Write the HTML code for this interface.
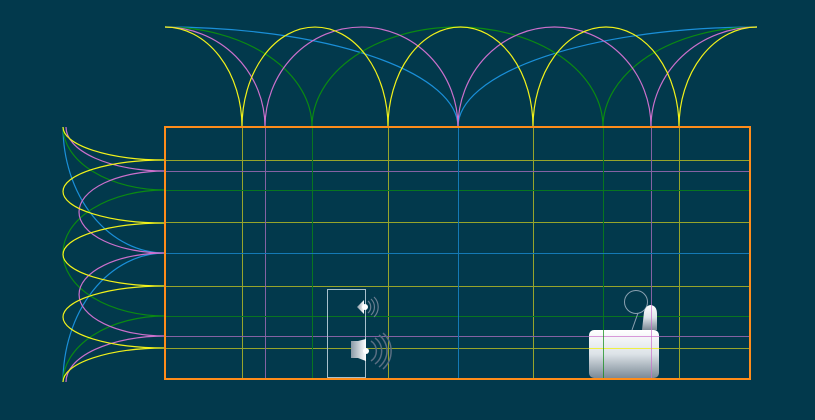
<!DOCTYPE html>
<html><head><meta charset="utf-8"><style>
html,body{margin:0;padding:0;background:#02394c;width:815px;height:420px;overflow:hidden}
</style></head><body>
<svg width="815" height="420" viewBox="0 0 815 420" xmlns="http://www.w3.org/2000/svg">
<defs>
<linearGradient id="g1" x1="0" y1="0" x2="0" y2="1"><stop offset="0" stop-color="#ffffff"/><stop offset="0.5" stop-color="#dde3e8"/><stop offset="1" stop-color="#7c8a96"/></linearGradient>
<linearGradient id="g2" x1="0" y1="0" x2="1" y2="0"><stop offset="0" stop-color="#8a9aa6"/><stop offset="1" stop-color="#ffffff"/></linearGradient>
</defs>
<g fill="none" stroke-width="1.2">
<path d="M165,27 A293,100 0 0 1 458,127 A299,100 0 0 1 757,27" stroke="#1a8fd8"/>
<path d="M165,27 A147,100 0 0 1 312,127 A145.5,100 0 0 1 603,127 A154,100 0 0 1 757,27" stroke="#0b8a12"/>
<path d="M165,27 A100,100 0 0 1 265,127 A96.5,100 0 0 1 458,127 A96.5,100 0 0 1 651,127 A106,100 0 0 1 757,27" stroke="#cc70cc"/>
<path d="M165,27 A77,100 0 0 1 242,127 A73,100 0 0 1 388,127 A72.5,100 0 0 1 533,127 A73,100 0 0 1 679,127 A78,100 0 0 1 757,27" stroke="#f2f21a"/>
<path d="M63,127 A102,126 0 0 0 165,253 A102,129 0 0 0 63,382" stroke="#1a8fd8"/>
<path d="M63,127 A102,63 0 0 0 165,190 A102,63 0 0 0 165,316 A102,66 0 0 0 63,382" stroke="#0b8a12"/>
<path d="M66,127 A99,44 0 0 0 165,171 A86,41 0 0 0 165,253 A86,41.5 0 0 0 165,336 A99,46 0 0 0 66,382" stroke="#cc70cc"/>
<path d="M63,127 A102,33 0 0 0 165,160 A102,31.5 0 0 0 165,223 A102,31.5 0 0 0 165,286 A102,31 0 0 0 165,348 A102,34 0 0 0 63,382" stroke="#f2f21a"/>
</g>
<g stroke-width="1" opacity="0.75">
<g stroke="#c8c820"><line x1="165" y1="160.5" x2="750" y2="160.5"/><line x1="165" y1="222.5" x2="750" y2="222.5"/><line x1="165" y1="286.5" x2="750" y2="286.5"/><line x1="165" y1="348.5" x2="750" y2="348.5"/>
<line x1="242.5" y1="127" x2="242.5" y2="379"/><line x1="388.5" y1="127" x2="388.5" y2="379"/><line x1="533.5" y1="127" x2="533.5" y2="379"/><line x1="679.5" y1="127" x2="679.5" y2="379"/></g>
<g stroke="#b070c0"><line x1="165" y1="171.5" x2="750" y2="171.5"/><line x1="165" y1="336.5" x2="750" y2="336.5"/><line x1="265.5" y1="127" x2="265.5" y2="379"/><line x1="651.5" y1="127" x2="651.5" y2="379"/></g>
<g stroke="#0b8a12"><line x1="165" y1="190.5" x2="750" y2="190.5"/><line x1="165" y1="316.5" x2="750" y2="316.5"/><line x1="312.5" y1="127" x2="312.5" y2="379"/><line x1="603.5" y1="127" x2="603.5" y2="379"/></g>
<g stroke="#1a8fd8"><line x1="165" y1="253.5" x2="750" y2="253.5"/><line x1="458.5" y1="127" x2="458.5" y2="379"/></g>
</g>
<rect x="165" y="127" width="585" height="252" fill="none" stroke="#ff8c1a" stroke-width="2"/>
<rect x="327.5" y="289.5" width="38" height="88" fill="none" stroke="#a8c0cc" stroke-width="1"/>
<polygon points="357,307 364,300 364,314" fill="url(#g2)"/>
<circle cx="365" cy="307" r="3" fill="#fff"/>
<g fill="none" stroke="#6a7e90" stroke-width="1.2"><path d="M368,301 A8,8 0 0 1 368,313"/><path d="M371,299 A11,11 0 0 1 371,315"/><path d="M374,297 A14,14 0 0 1 374,317"/></g>
<polygon points="351,341 358,341 366,339 366,361 358,358 351,358" fill="url(#g2)"/>
<polygon points="351,345 366,339 366,361 351,355" fill="url(#g2)"/>
<circle cx="366" cy="351" r="3" fill="#fff"/>
<g fill="none" stroke="#5a6e82" stroke-width="1.5"><path d="M371,341 A12,12 0 0 1 371,361"/><path d="M375,338 A16,16 0 0 1 375,364"/><path d="M379,335 A20,20 0 0 1 379,367"/><path d="M383,333 A24,24 0 0 1 383,369"/></g>
<circle cx="636" cy="302" r="11.5" fill="none" stroke="#8aa0b0" stroke-width="1"/>
<line x1="638" y1="313" x2="632" y2="330" stroke="#8aa0b0" stroke-width="1"/>
<path d="M642,330 L644,312 Q646,305 651,305 Q657,306 657,314 L657,330 Z" fill="url(#g1)"/>
<rect x="589" y="330" width="70" height="48" rx="5" fill="url(#g1)"/>
<line x1="589" y1="348.5" x2="659" y2="348.5" stroke="#f2f21a" stroke-width="1" opacity="0.8"/>
<line x1="589" y1="336.5" x2="659" y2="336.5" stroke="#cc70cc" stroke-width="1" opacity="0.7"/>
<line x1="603.5" y1="330" x2="603.5" y2="378" stroke="#0b8a12" stroke-width="1" opacity="0.7"/>
<line x1="651.5" y1="305" x2="651.5" y2="378" stroke="#cc70cc" stroke-width="1" opacity="0.7"/>
</svg>
</body></html>
